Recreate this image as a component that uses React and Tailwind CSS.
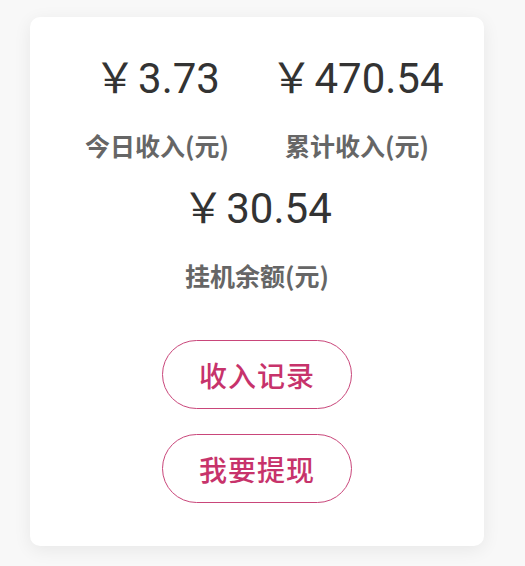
import React from "react";

const NUM_FONT = { fontFamily: "Roboto, 'Noto Sans CJK SC', sans-serif" };

function Stat({ amount, label, className = "" }) {
  return (
    <div className={`flex flex-col items-center ${className}`}>
      <div className="text-[42px] leading-[48px] text-[#333]" style={NUM_FONT}>
        <span className="font-['Noto_Sans_CJK_SC',sans-serif] mr-[2px]">￥</span>
        {amount}
      </div>
      <div className="mt-[28px] text-[25px] leading-[28px] font-bold text-[#666] font-['Noto_Sans_CJK_SC',sans-serif]">
        {label}
      </div>
    </div>
  );
}

function OutlineButton({ children }) {
  return (
    <button className="w-[190px] h-[69px] rounded-full border-[1.5px] border-[#c9467a] bg-white text-[28px] font-medium text-[#c7336b] font-['Noto_Sans_CJK_SC',sans-serif] tracking-[1px]">
      {children}
    </button>
  );
}

export default function App() {
  return (
    <div className="w-[525px] h-[566px] bg-[#f8f8f8] pt-[17px] px-[30px]">
      <div className="w-[454px] h-[529px] bg-white rounded-[10px] shadow-[0_4px_18px_rgba(0,0,0,0.07)] flex flex-col items-center pt-[34px]">
        <div className="flex justify-center w-full">
          <Stat amount="3.73" label="今日收入(元)" className="w-[200px]" />
          <Stat amount="470.54" label="累计收入(元)" className="w-[200px]" />
        </div>
        <Stat amount="30.54" label="挂机余额(元)" className="mt-[22px]" />
        <div className="mt-[51px] flex flex-col items-center gap-[25px]">
          <OutlineButton>收入记录</OutlineButton>
          <OutlineButton>我要提现</OutlineButton>
        </div>
      </div>
    </div>
  );
}
